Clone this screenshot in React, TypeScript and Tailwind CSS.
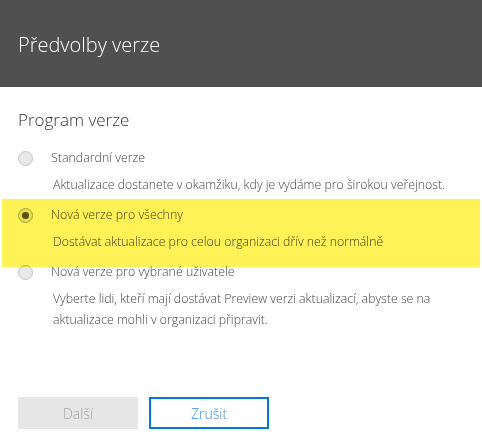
import React from "react";

type Option = {
  label: string;
  desc: string;
  checked?: boolean;
};

const options: Option[] = [
  {
    label: "Standardní verze",
    desc: "Aktualizace dostanete v okamžiku, kdy je vydáme pro širokou veřejnost.",
  },
  {
    label: "Nová verze pro všechny",
    desc: "Dostávat aktualizace pro celou organizaci dřív než normálně",
    checked: true,
  },
  {
    label: "Nová verze pro vybrané uživatele",
    desc: "Vyberte lidi, kteří mají dostávat Preview verzi aktualizací, abyste se na aktualizace mohli v organizaci připravit.",
  },
];

function Radio({ checked }: { checked?: boolean }) {
  return (
    <span
      className={
        "flex h-[15px] w-[15px] shrink-0 items-center justify-center rounded-full border bg-[#e8e8e8] " +
        (checked ? "border-[#a8a8a8]" : "border-[#c6c6c6]")
      }
    >
      {checked && <span className="h-[7px] w-[7px] rounded-full bg-[#555]" />}
    </span>
  );
}

export default function App() {
  return (
    <div
      className="relative flex h-[448px] w-[482px] flex-col bg-white"
      style={{ fontFamily: '"Open Sans", "Noto Sans", sans-serif' }}
    >
      {/* Header */}
      <div className="flex h-[87px] items-center bg-[#505050] px-[18px] pt-[2px]">
        <h1 className="text-[20px] font-light text-white">Předvolby verze</h1>
      </div>

      {/* Body */}
      <div className="flex flex-1 flex-col">
        <h2 className="ml-[18px] mt-[21px] text-[17px] font-light leading-[24px] text-[#333]">
          Program verze
        </h2>

        <div className="mt-[16px] flex flex-col gap-[10px]">
          {options.map((o) => (
            <div key={o.label} className="flex flex-col pl-[18px]">
              <label className="flex h-[20px] items-center">
                <Radio checked={o.checked} />
                <span className="ml-[18px] text-[12.4px] font-[350] text-[#444]">{o.label}</span>
              </label>
              <p className="ml-[35px] mt-[6px] pr-[6px] text-[12.3px] font-[350] leading-[21px] text-[#444]">
                {o.desc}
              </p>
            </div>
          ))}
        </div>

        <div className="mt-auto mb-[19px] ml-[18px] flex gap-[11px]">
          <button className="h-[32px] w-[120px] bg-[#e6e6e6] text-[14px] font-light text-[#a6a6a6]">
            Další
          </button>
          <button className="h-[32px] w-[120px] border-2 border-[#0078d7] bg-white text-[14px] font-light text-[#3d92e2]">
            Zrušit
          </button>
        </div>
      </div>

      {/* Marker highlight over the selected option */}
      <div className="pointer-events-none absolute left-[2px] right-[2px] top-[199px] h-[68px] bg-[#fff257] mix-blend-multiply" />
    </div>
  );
}
